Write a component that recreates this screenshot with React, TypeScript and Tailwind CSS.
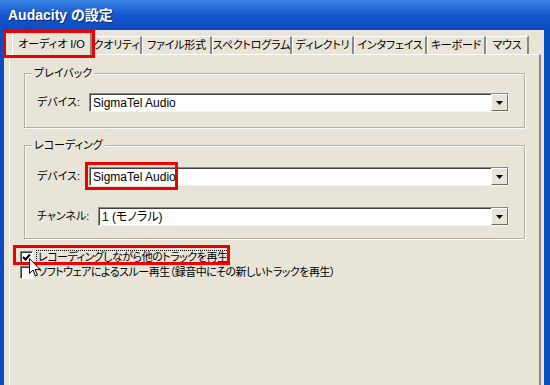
import type { ReactNode } from 'react';

const jp = "[font-family:'Liberation_Sans','Noto_Sans_CJK_JP',sans-serif] [font-feature-settings:'palt']";

const tabs = [
  { label: 'クオリティ', w: 'w-[50px]' },
  { label: 'ファイル形式', w: 'w-[70px]' },
  { label: 'スペクトログラム', w: 'w-[80px]' },
  { label: 'ディレクトリ', w: 'w-[62px]' },
  { label: 'インタフェイス', w: 'w-[73px]' },
  { label: 'キーボード', w: 'w-[59px]' },
  { label: 'マウス', w: 'w-[43px]' },
];

function Combo({ value, marked }: { value: string; marked?: boolean }) {
  return (
    <div className="relative flex-1 h-[19px] flex bg-white border-t border-l border-[#8c8b80] border-b border-r border-b-[#f4f3ee] border-r-[#f4f3ee] shadow-[inset_1px_1px_0_#404040]">
      <div className="flex-1 pl-[3px] pt-[1px] text-[12px] leading-[16px] text-black">{value}</div>
      <div className="w-[17px] h-[17px] bg-[#e8e5d8] border-t border-l border-white border-b border-r border-b-[#6f6e66] border-r-[#6f6e66] flex items-center justify-center">
        <svg width="7" height="4" viewBox="0 0 7 4">
          <path d="M0 0h7L3.5 4z" fill="#000" />
        </svg>
      </div>
      {marked && (
        <div className="absolute -left-[5px] -top-[6px] w-[93px] h-[28px] border-[3px] border-[#ee0000]" />
      )}
    </div>
  );
}

function Group({ title, children, className }: { title: string; children: ReactNode; className: string }) {
  return (
    <div className={`relative mx-[14px] border border-[#b3b0a2] shadow-[inset_1px_1px_0_#fbfbf7,1px_1px_0_#fbfbf7] ${className}`}>
      <span className="absolute -top-[8px] left-[7px] px-[2px] bg-[#e8e5d8] text-[11px] leading-[14px] text-black">{title}</span>
      {children}
    </div>
  );
}

function Check({ checked, label, focused, marked }: { checked: boolean; label: string; focused?: boolean; marked?: boolean }) {
  return (
    <div className="relative flex items-center h-[15px] pl-[11px]">
      <div className="w-[13px] h-[13px] bg-white border-t border-l border-[#7a7a70] border-b border-r border-b-white border-r-white shadow-[inset_1px_1px_0_#3a3a3a] flex items-center justify-center">
        {checked && (
          <svg width="9" height="9" viewBox="0 0 9 9">
            <path d="M1 4l2.5 2.5L8 1.5" stroke="#000" strokeWidth="2" fill="none" />
          </svg>
        )}
      </div>
      <span className={`ml-[4px] px-[1px] text-[11px] leading-[13px] tracking-[-0.5px] text-black ${focused ? 'outline outline-1 outline-dotted outline-black' : ''}`}>{label}</span>
      {marked && (
        <div className="absolute left-[4px] -top-[5px] w-[217px] h-[20px] border-[3px] border-[#ee0000]" />
      )}
    </div>
  );
}

export default function App() {
  return (
    <div className={`relative w-[550px] h-[385px] overflow-hidden flex flex-col bg-[#0b4dc2] ${jp}`}>
      {/* タイトルバー */}
      <div className="h-[30px] shrink-0 bg-gradient-to-b from-[#3a84e4] via-[#1656ce] to-[#0c4cc0] flex items-center pl-[8px]">
        <span className="text-white font-bold text-[14px] [text-shadow:1px_1px_0_#0a2a6a]">Audacity の設定</span>
      </div>

      {/* 本体 */}
      <div className="flex-1 ml-[4px] mr-[6px] bg-[#e8e5d8] flex flex-col">
        {/* タブ */}
        <div className="h-[24px] shrink-0 flex items-end pl-[8px]">
          <div className="relative w-[80px] h-[23px] -mb-[1px] z-10 bg-[#e8e5d8] border-t border-l border-white border-r-2 border-r-[#8a897f] flex items-center justify-center text-[11px] text-black">
            オーディオ I/O
            <div className="absolute -left-[10px] -top-[3px] w-[92px] h-[28px] border-[3px] border-[#ee0000]" />
          </div>
          {tabs.map((t) => (
            <div
              key={t.label}
              className={`${t.w} h-[18px] border-t border-l border-white border-r-2 border-r-[#8a897f] flex items-center justify-center text-[11px] tracking-[-0.2px] text-black whitespace-nowrap`}
            >
              {t.label}
            </div>
          ))}
        </div>

        {/* パネル */}
        <div className="flex-1 ml-[5px] mr-[3px] border-t border-l border-white border-r-2 border-r-[#8a897f] flex flex-col">
          <Group title="プレイバック" className="mt-[18px] h-[55px] pt-[19px] pr-[15px] pl-[12px]">
            <div className="flex items-center">
              <span className="w-[52px] text-[11px] text-black">デバイス:</span>
              <Combo value="SigmaTel Audio" />
            </div>
          </Group>

          <Group title="レコーディング" className="mt-[17px] h-[94px] pt-[21px] pr-[15px] pl-[12px]">
            <div className="flex items-center">
              <span className="w-[52px] text-[11px] text-black">デバイス:</span>
              <Combo value="SigmaTel Audio" marked />
            </div>
            <div className="flex items-center mt-[21px]">
              <span className="w-[61px] text-[11px] text-black">チャンネル:</span>
              <Combo value="1 (モノラル)" />
            </div>
          </Group>

          <div className="mt-[11px] ml-[-1px]">
            <Check checked label="レコーディングしながら他のトラックを再生" focused marked />
            <Check checked={false} label="ソフトウェアによるスルー再生（録音中にその新しいトラックを再生）" />
          </div>
        </div>
      </div>

      {/* マウスカーソル */}
      <svg className="absolute left-[29px] top-[258px]" width="12" height="20" viewBox="0 0 12 20">
        <path d="M0.5 0.5v15l3.5-3.5 2.5 6 2-1-2.5-5.5h5z" fill="#fff" stroke="#000" strokeWidth="1" />
      </svg>
    </div>
  );
}
